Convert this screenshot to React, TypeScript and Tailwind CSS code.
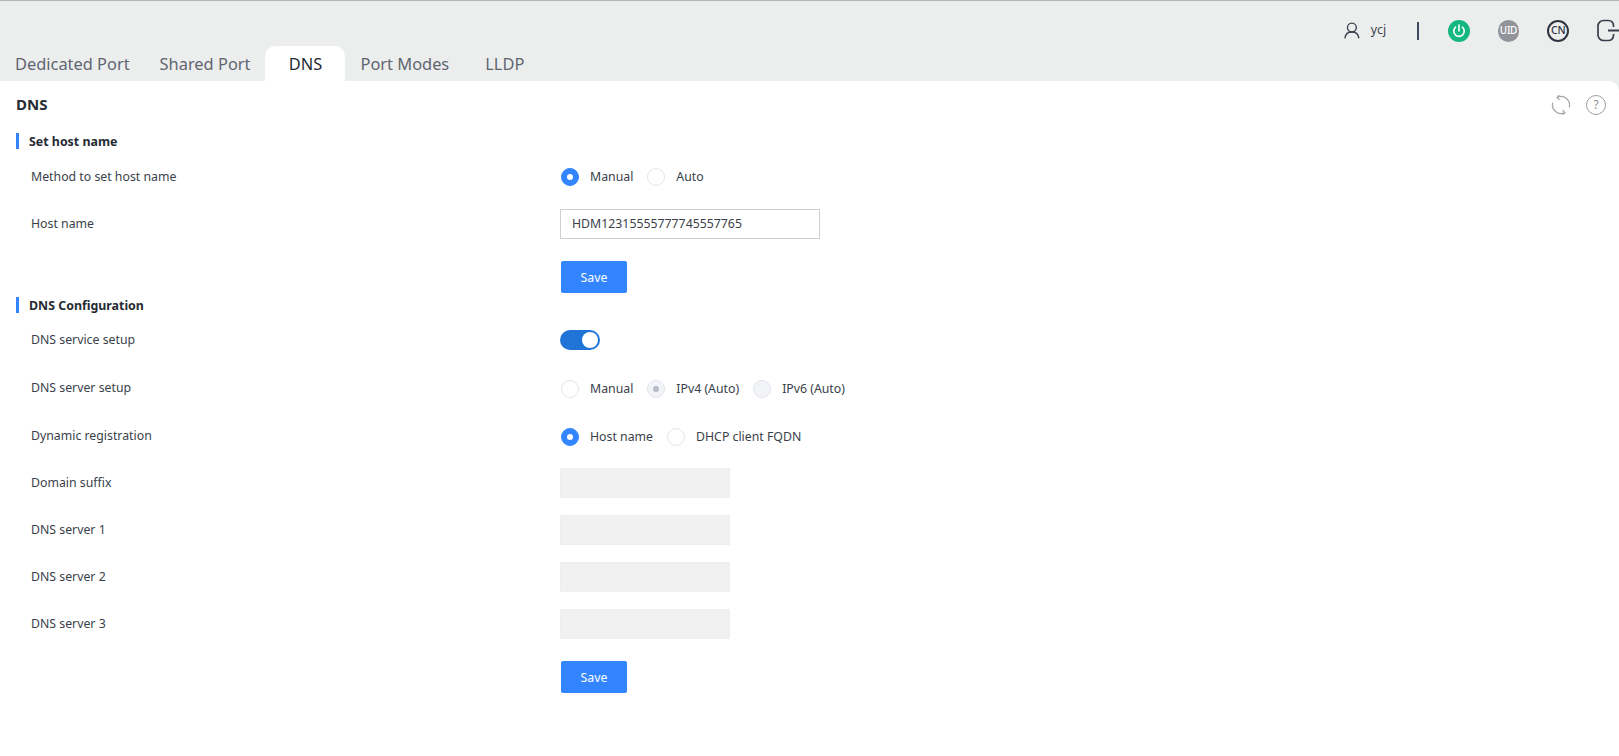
import React from "react";

const font = { fontFamily: '"Noto Sans", sans-serif' };

function Radio({ state = "off", label }: { state?: "on" | "off" | "disabledOn" | "disabled"; label: string }) {
  const cls =
    state === "on"
      ? "bg-[#3385ff] border-[#3385ff]"
      : state === "off"
      ? "bg-white border-[#e3e5ec]"
      : "bg-[#f3f4f8] border-[#e3e5ec]";
  return (
    <div className="flex items-center mr-[14px]">
      <span className={`w-[18px] h-[18px] rounded-full border flex items-center justify-center ${cls}`}>
        {state === "on" && <span className="w-[6px] h-[6px] rounded-full bg-white" />}
        {state === "disabledOn" && <span className="w-[6px] h-[6px] rounded-full bg-[#b9bcc6]" />}
      </span>
      <span className="ml-[11px] pt-[1px] text-[12.3px] text-[#3a3f4b]">{label}</span>
    </div>
  );
}

function Section({ title, className }: { title: string; className: string }) {
  return (
    <div className={`flex items-center h-[16px] ml-[16px] pl-[10px] border-l-[3px] border-[#3385ff] ${className}`}>
      <span className="pt-[3px] text-[12.4px] font-bold text-[#262b33]">{title}</span>
    </div>
  );
}

function Row({ label, className, children }: { label: string; className: string; children: React.ReactNode }) {
  return (
    <div className={`flex items-center ${className}`}>
      <div className="w-[560px] pl-[31px] shrink-0 pt-[1px] text-[12.3px] text-[#3a3f4b]">{label}</div>
      <div className="flex items-center">{children}</div>
    </div>
  );
}

function SaveButton({ className }: { className: string }) {
  return (
    <div className={`pl-[561px] ${className}`}>
      <button className="w-[66px] h-[32px] pt-[2px] rounded-[2px] bg-[#3385ff] text-white text-[12.3px]">Save</button>
    </div>
  );
}

function Disabled() {
  return <div className="w-[170px] h-[30px] bg-[#f1f1f1] border border-[#eeeeee]" />;
}

export default function App() {
  return (
    <div className="h-screen w-full overflow-hidden bg-[#eceeee] flex flex-col" style={font}>
      <header className="h-[81px] shrink-0 border-t border-[#b5b5b5] flex flex-col">
        <div className="h-[45px] flex items-center pl-[1344px] pt-[14px] shrink-0">
          <svg width="16" height="17" viewBox="0 0 16 17" fill="none" stroke="#3a3f4b" strokeWidth="1.4">
            <circle cx="8" cy="5.5" r="4.5" />
            <path d="M1 16c.6-4 3.2-6 7-6s6.4 2 7 6" strokeLinecap="round" />
          </svg>
          <span className="ml-[11px] w-[47px] text-[12.3px] text-[#3a3f4b]">ycj</span>
          <div className="w-[2px] h-[18px] bg-[#3f4a5e]" />
          <div className="ml-[29px] w-[22px] h-[22px] rounded-full bg-[#14b87f] flex items-center justify-center">
            <svg width="14" height="14" viewBox="0 0 14 14" fill="none" stroke="white" strokeWidth="1.6" strokeLinecap="round">
              <path d="M7 1v6" />
              <path d="M3.6 3.2a5.2 5.2 0 1 0 6.8 0" />
            </svg>
          </div>
          <div className="ml-[28px] w-[22px] h-[22px] rounded-full bg-[#92939b] flex items-center justify-center text-white text-[10px] font-medium tracking-[-0.3px]">
            UID
          </div>
          <div className="ml-[28px] mt-[1px] w-[22px] h-[22px] rounded-full border-2 border-[#2f3540] flex items-center justify-center text-[#2f3540] text-[10.5px] font-medium tracking-[-0.3px]">
            CN
          </div>
          <svg className="ml-[28px] shrink-0" width="22" height="23" viewBox="0 0 22 23" fill="none" stroke="#39404c" strokeWidth="1.7">
            <path d="M16.5 8V6.5A5 5 0 0 0 11.5 1.5H6.5A5.5 5.5 0 0 0 1 7v9a5.5 5.5 0 0 0 5.5 5.5h5a5 5 0 0 0 5-5V15" />
            <path d="M11 11.5h11" strokeWidth="2" />
          </svg>
        </div>
        <div className="flex h-[35px] items-stretch text-[16.4px] text-[#5f6570]">
          <div className="ml-[15px] flex items-center pt-[1px]">Dedicated Port</div>
          <div className="ml-[30px] flex items-center pt-[1px]">Shared Port</div>
          <div className="ml-[15px] w-[80px] bg-white rounded-t-[10px] flex items-center justify-center pt-[1px] text-[#262b33]">DNS</div>
          <div className="ml-[15px] flex items-center pt-[1px]">Port Modes</div>
          <div className="ml-[36px] flex items-center pt-[1px]">LLDP</div>
        </div>
      </header>

      <main className="flex-1 bg-white rounded-tr-[10px]">
        <div className="h-[52px] flex items-center justify-between pl-[16px] pr-[13px] pt-[1px] pb-[6px]">
          <span className="text-[15px] font-bold text-[#262b33]">DNS</span>
          <div className="flex items-center gap-[15px]">
            <svg width="20" height="20" viewBox="0 0 20 20" fill="none" stroke="#a3a6ab" strokeWidth="1.2" strokeLinecap="round" strokeLinejoin="round">
              <path d="M6.5 2.3A8.5 8.5 0 0 1 18.3 12" />
              <path d="M13.5 17.7A8.5 8.5 0 0 1 1.7 8" />
              <path d="M8 0.5 6 2.4l2 2.1" />
              <path d="M12 15.5l2 2.1-2 1.9" />
            </svg>
            <div className="w-[20px] h-[20px] rounded-full border border-[#9b9ea3] flex items-center justify-center text-[12px] text-[#8d9095]">?</div>
          </div>
        </div>

        <Section title="Set host name" className="" />
        <Row label="Method to set host name" className="mt-[5px] h-[46px]">
          <div className="flex pl-[1px]">
            <Radio state="on" label="Manual" />
            <Radio label="Auto" />
          </div>
        </Row>
        <Row label="Host name" className="h-[48px]">
          <div className="w-[260px] h-[30px] border border-[#d0d0d0] pl-[11px] pt-[1px] flex items-center text-[12.3px] text-[#3a3f4b]">
            HDM12315555777745557765
          </div>
        </Row>
        <SaveButton className="mt-[13px]" />

        <Section title="DNS Configuration" className="mt-[4px]" />
        <Row label="DNS service setup" className="mt-[3px] h-[48px]">
          <div className="w-[40px] h-[20px] rounded-full bg-[#2074d8] flex items-center justify-end pr-[2px]">
            <span className="w-[16px] h-[16px] rounded-full bg-white" />
          </div>
        </Row>
        <Row label="DNS server setup" className="h-[48px]">
          <div className="flex pl-[1px] pt-[1px]">
            <Radio label="Manual" />
            <Radio state="disabledOn" label="IPv4 (Auto)" />
            <Radio state="disabled" label="IPv6 (Auto)" />
          </div>
        </Row>
        <Row label="Dynamic registration" className="h-[48px]">
          <div className="flex pl-[1px] pt-[2px]">
            <Radio state="on" label="Host name" />
            <Radio label="DHCP client FQDN" />
          </div>
        </Row>
        <Row label="Domain suffix" className="h-[46px]"><Disabled /></Row>
        <Row label="DNS server 1" className="h-[48px]"><Disabled /></Row>
        <Row label="DNS server 2" className="h-[46px]"><Disabled /></Row>
        <Row label="DNS server 3" className="h-[48px]"><Disabled /></Row>
        <SaveButton className="mt-[13px]" />
      </main>
    </div>
  );
}
